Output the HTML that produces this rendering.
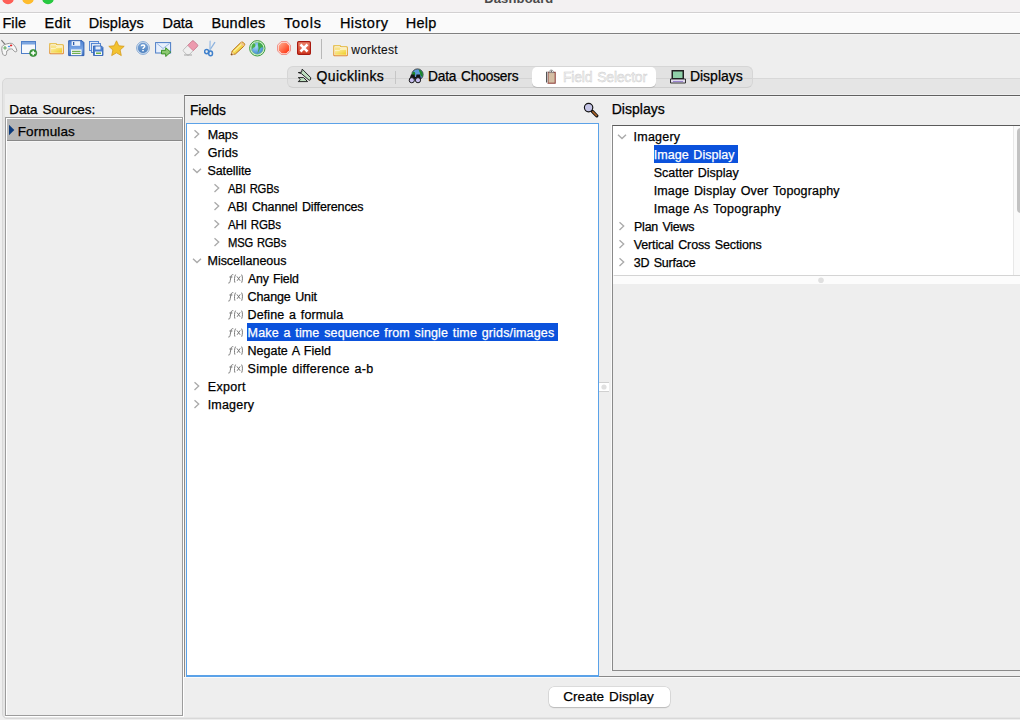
<!DOCTYPE html><html><head><meta charset="utf-8"><style>
html,body{margin:0;padding:0;width:1020px;height:720px;overflow:hidden;background:#eeeeee;font-family:"Liberation Sans",sans-serif}
.t{position:absolute;white-space:nowrap;transform-origin:0 0;font-family:"Liberation Sans",sans-serif}
.r{position:absolute;display:block}
</style></head><body>
<div class="r" style="left:0px;top:0px;width:1020px;height:12px;background:#f3f1f2"></div>
<div class="r" style="left:0px;top:12px;width:1020px;height:1px;background:#d2d0d1"></div>
<svg class="r" style="left:0px;top:0px" width="60" height="8" viewBox="0 0 60 8"><circle cx="8" cy="-1.5" r="5.8" fill="#fe5f57"/><circle cx="28" cy="-1.5" r="5.8" fill="#febc2e"/><circle cx="48" cy="-1.5" r="5.8" fill="#28c840"/></svg>
<div class="t" style="left:484.20px;top:-8.5px;font-size:13px;line-height:13px;color:#4a4a4a;letter-spacing:0.153px;font-weight:bold;">Dashboard</div>
<div class="r" style="left:0px;top:13px;width:1020px;height:20px;background:#fafafa"></div>
<div class="r" style="left:0px;top:13px;width:1020px;height:1px;background:#fefefe"></div>
<div class="r" style="left:0px;top:33px;width:1020px;height:1px;background:#808080"></div>
<div class="r" style="left:0px;top:34px;width:1020px;height:1px;background:#f3f3f3"></div>
<div class="t" style="left:2.40px;top:16px;font-size:14.5px;line-height:14.5px;color:#000;letter-spacing:0.108px;-webkit-text-stroke:0.25px #000;">File</div>
<div class="t" style="left:44.50px;top:16px;font-size:14.5px;line-height:14.5px;color:#000;letter-spacing:0.367px;-webkit-text-stroke:0.25px #000;">Edit</div>
<div class="t" style="left:88.70px;top:16px;font-size:14.5px;line-height:14.5px;color:#000;letter-spacing:0.055px;-webkit-text-stroke:0.25px #000;">Displays</div>
<div class="t" style="left:162.50px;top:16px;font-size:14.5px;line-height:14.5px;color:#000;letter-spacing:-0.096px;-webkit-text-stroke:0.25px #000;">Data</div>
<div class="t" style="left:211.40px;top:16px;font-size:14.5px;line-height:14.5px;color:#000;letter-spacing:0.238px;-webkit-text-stroke:0.25px #000;">Bundles</div>
<div class="t" style="left:283.90px;top:16px;font-size:14.5px;line-height:14.5px;color:#000;letter-spacing:0.806px;-webkit-text-stroke:0.25px #000;">Tools</div>
<div class="t" style="left:339.90px;top:16px;font-size:14.5px;line-height:14.5px;color:#000;letter-spacing:0.496px;-webkit-text-stroke:0.25px #000;">History</div>
<div class="t" style="left:405.80px;top:16px;font-size:14.5px;line-height:14.5px;color:#000;letter-spacing:0.229px;-webkit-text-stroke:0.25px #000;">Help</div>
<div class="r" style="left:0px;top:35px;width:1020px;height:60px;background:#eeeeee"></div>
<svg class="r" style="left:0px;top:38px" width="20" height="20" viewBox="0 0 20 20"><path d="M1.4 2.2 L5.2 6.6" stroke="#777" stroke-width="1.1" fill="none"/>
<path d="M2.2 8.5 C3 6.8 6 6 8 5.6 C10.5 5 12.5 5.2 13.5 6.5 C15 8 16.5 10.5 16.8 12.5 C17 13.8 15.5 14.2 14.5 13.5 C13.5 12.5 13 11.5 12 10.8 C10.5 10.5 8 12 6.8 13 C6.5 14.5 6.8 16.5 6 17.2 C5 17.6 3.5 17.5 3 16.5 C2 14 1.2 11 2.2 8.5 Z" fill="#f7f7f7" stroke="#8a8a8a" stroke-width="0.9"/>
<path d="M7.5 11.5 C9 10.5 11 10.2 12 10.8" stroke="#c8c8c8" stroke-width="1.2" fill="none"/>
<path d="M3.2 9.9 h3.6 M5 8.1 v3.6" stroke="#5aa85a" stroke-width="1.05"/>
<ellipse cx="9" cy="8.4" rx="1.2" ry="0.75" fill="#4a96f0"/><ellipse cx="11.1" cy="7.4" rx="1.2" ry="0.85" fill="#e02424"/></svg>
<svg class="r" style="left:21px;top:41px" width="17" height="16" viewBox="0 0 17 16"><rect x="0.5" y="0.5" width="14" height="12" fill="#f6f8fc" stroke="#4f7fc8"/>
<rect x="1" y="1" width="13" height="2.5" fill="#7aa4e0"/>
<circle cx="12.2" cy="12" r="3.6" fill="#3c9a3c" stroke="#2a7a2a" stroke-width="0.6"/>
<path d="M9.9 12 h4.6 M12.2 9.7 v4.6" stroke="#fff" stroke-width="1.5"/></svg>
<svg class="r" style="left:48.5px;top:42.5px" width="16" height="13" viewBox="0 0 16 13"><defs><linearGradient id="fo1b" x1="0" y1="0" x2="0" y2="1"><stop offset="0" stop-color="#e2b62e"/><stop offset="1" stop-color="#e0862a"/></linearGradient><linearGradient id="fo1f" x1="0" y1="0" x2="1" y2="1"><stop offset="0" stop-color="#fbf0b0"/><stop offset="1" stop-color="#f0cc20"/></linearGradient></defs>
<path d="M0.8 0.8 H7.2 L8 1.8 H13.5 Q14.3 1.8 14.3 2.6 V10.2 Q14.3 10.8 13.5 10.8 H1.6 Q0.8 10.8 0.8 10 Z" fill="#fffdf0" stroke="url(#fo1b)" stroke-width="1.1"/>
<path d="M2 2.3 H6.8 L7.6 3.2 H13 V3.8 H7.6 L6.8 5 H2 Z" fill="#f6dc70" opacity="0.8"/>
<path d="M2 5.4 H6.5 L7.5 4.6 H13 V9.7 H2 Z" fill="url(#fo1f)"/></svg>
<svg class="r" style="left:68px;top:40px" width="17" height="17" viewBox="0 0 17 17"><defs><linearGradient id="fl" x1="0" y1="0" x2="0" y2="1"><stop offset="0" stop-color="#4a7ed0"/><stop offset="0.55" stop-color="#7aa6e6"/><stop offset="1" stop-color="#3f72c4"/></linearGradient></defs>
<path d="M0.7 0.7 h13.3 l1.9 1.9 v13 h-15.2 Z" fill="url(#fl)" stroke="#2c5cae" stroke-width="1"/>
<rect x="3.6" y="1.2" width="8.6" height="4.6" fill="#eef3fa"/><rect x="5" y="2" width="1.3" height="3" fill="#2c5cae"/>
<rect x="3" y="9.4" width="10.6" height="5.8" fill="#f6f8fb"/><rect x="4" y="10.8" width="8.6" height="1.2" fill="#72b050"/><rect x="4" y="12.8" width="8.6" height="1.2" fill="#72b050"/></svg>
<svg class="r" style="left:89px;top:41px" width="15" height="15" viewBox="0 0 15 15"><rect x="0.5" y="0.5" width="9" height="9" fill="#dfe8f6" stroke="#4a7fd0" stroke-width="0.9"/>
<rect x="2.5" y="2.5" width="9" height="9" fill="#dfe8f6" stroke="#4a7fd0" stroke-width="0.9"/>
<path d="M4.5 5 h8 l1.5 1.5 v8 h-9.5 Z" fill="#4a7fd0" stroke="#2f5fae" stroke-width="0.8"/>
<rect x="6.5" y="5.5" width="5" height="3" fill="#e8eef8"/><rect x="6" y="10.5" width="7" height="3.5" fill="#f4f7fb"/><rect x="7" y="11.5" width="5" height="1.5" fill="#6ab04a"/></svg>
<svg class="r" style="left:108px;top:40px" width="17" height="17" viewBox="0 0 17 17"><path d="M8.5 0.8 L10.8 5.8 L16.2 6.3 L12.1 10 L13.3 15.6 L8.5 12.8 L3.7 15.6 L4.9 10 L0.8 6.3 L6.2 5.8 Z" fill="#f2c230" stroke="#d69a1a" stroke-width="0.8" stroke-linejoin="round"/></svg>
<svg class="r" style="left:136px;top:41px" width="15" height="15" viewBox="0 0 15 15"><defs><linearGradient id="hg" x1="0" y1="0" x2="0" y2="1"><stop offset="0" stop-color="#7aa6d8"/><stop offset="1" stop-color="#4f82c0"/></linearGradient></defs>
<circle cx="7" cy="7" r="6.4" fill="#dfeaf6" stroke="#78a0d0" stroke-width="0.9"/>
<circle cx="7" cy="7" r="4.9" fill="url(#hg)" stroke="#4a7ab8" stroke-width="0.5"/>
<path d="M5.3 5.3 C5.3 3.5 8.7 3.5 8.7 5.3 C8.7 6.5 7 6.6 7 8" stroke="#fff" stroke-width="1.5" fill="none"/><rect x="6.2" y="9" width="1.6" height="1.3" fill="#fff"/></svg>
<svg class="r" style="left:155px;top:41.5px" width="17" height="15" viewBox="0 0 17 15"><rect x="0.6" y="0.6" width="15" height="10.4" fill="#e8f0fc" stroke="#4a7cc6" stroke-width="1"/>
<path d="M2 1.5 L8 6.5 L14.5 1.5" stroke="#8fb0e0" stroke-width="0.9" fill="none"/>
<path d="M6.5 8.3 h4.2 v-2.6 l5 4.4 l-5 4.4 v-2.6 h-4.2 Z" fill="#8cc870" stroke="#2f8a1a" stroke-width="0.9"/></svg>
<svg class="r" style="left:182px;top:40px" width="17" height="16" viewBox="0 0 17 16"><g transform="rotate(-45 8.5 8)"><rect x="1.2" y="4.2" width="14.5" height="7.6" rx="1.5" fill="#efefef" stroke="#b5b5b5" stroke-width="0.8"/>
<path d="M8.5 4.2 H14.2 A1.5 1.5 0 0 1 15.7 5.7 V10.3 A1.5 1.5 0 0 1 14.2 11.8 H8.5 Z" fill="#ec9aae" stroke="#d07c92" stroke-width="0.8"/></g>
<path d="M2 15 h8" stroke="#a5a5a5" stroke-width="1"/></svg>
<svg class="r" style="left:204px;top:40px" width="13" height="17" viewBox="0 0 13 17"><path d="M6.2 0.8 L5.8 11 M11 2.2 L5.2 11" stroke="#8db3de" stroke-width="1.3" fill="none"/>
<path d="M6.2 0.8 L5.8 11" stroke="#d8e6f4" stroke-width="0.5" fill="none"/>
<ellipse cx="2.6" cy="11.6" rx="2" ry="2.1" fill="none" stroke="#3f80cc" stroke-width="1.5"/><ellipse cx="6.6" cy="13.4" rx="1.9" ry="2.3" fill="none" stroke="#3f80cc" stroke-width="1.5"/></svg>
<svg class="r" style="left:230px;top:41px" width="16" height="15" viewBox="0 0 16 15"><path d="M1 14 L2.2 10 L10.8 1.6 C11.6 0.9 12.6 0.9 13.4 1.6 L14.2 2.4 C14.9 3.2 14.9 4.2 14.2 4.9 L5.4 13 Z" fill="#f4d850" stroke="#b86e16" stroke-width="1"/>
<path d="M3.6 10.6 L12 2.6" stroke="#fff4a0" stroke-width="1.2"/>
<path d="M1.8 10.8 L4.6 13.4 L1 14 Z" fill="#f0c8a0"/><path d="M1 14 L1.5 12.2 L2.8 13.5 Z" fill="#5a2a08"/><path d="M10.8 1.6 L14.2 4.9" stroke="#f0c090" stroke-width="1.8"/></svg>
<svg class="r" style="left:249px;top:40px" width="17" height="17" viewBox="0 0 17 17"><defs><radialGradient id="gl" cx="0.4" cy="0.35" r="0.7"><stop offset="0" stop-color="#a8d8f8"/><stop offset="1" stop-color="#3a86d0"/></radialGradient></defs>
<circle cx="8.3" cy="8.3" r="7.7" fill="#d8f2d0" stroke="#3a9c3e" stroke-width="1"/>
<circle cx="8.3" cy="8.3" r="6" fill="url(#gl)" stroke="#7cc870" stroke-width="0.6"/>
<path d="M4.2 3.6 C6 3.2 7 4.8 6.2 6.5 C5.6 7.8 4.4 7.2 3.2 9.2 C2.5 7 2.8 5 4.2 3.6 Z" fill="#48b04a"/>
<path d="M9.5 2.6 C12 3 14 5 14.2 7.6 C13 7 12 7.5 11.2 8.6 C10.5 10.5 9.5 12 8.5 13.5 C8.8 11 9.8 9.2 9.4 7.2 C9 5.6 8.6 4 9.5 2.6 Z" fill="#3aa83c" opacity="0.9"/></svg>
<svg class="r" style="left:277px;top:41px" width="14" height="14" viewBox="0 0 14 14"><defs><linearGradient id="sg" x1="0" y1="0" x2="1" y2="1"><stop offset="0" stop-color="#ffb090"/><stop offset="1" stop-color="#ff2a08"/></linearGradient></defs>
<path d="M4.2 0.5 h5.6 l3.7 3.7 v5.6 l-3.7 3.7 h-5.6 l-3.7 -3.7 v-5.6 Z" fill="#fbe0dc" stroke="#f08a80" stroke-width="0.9"/>
<path d="M4.7 1.8 h4.6 l2.9 2.9 v4.6 l-2.9 2.9 h-4.6 l-2.9 -2.9 v-4.6 Z" fill="url(#sg)"/></svg>
<svg class="r" style="left:297px;top:41px" width="14" height="14" viewBox="0 0 14 14"><defs><linearGradient id="xg" x1="0" y1="0" x2="0" y2="1"><stop offset="0" stop-color="#f08a70"/><stop offset="1" stop-color="#d03820"/></linearGradient></defs>
<rect x="0.6" y="0.6" width="12.8" height="12.8" rx="1.2" fill="url(#xg)" stroke="#a81a10" stroke-width="1.2"/>
<path d="M4.4 4.4 L9.6 9.6 M9.6 4.4 L4.4 9.6" stroke="#fff" stroke-width="2.6" stroke-linecap="square"/></svg>
<div class="r" style="left:321px;top:39px;width:1px;height:20px;background:#b8b8b8"></div>
<svg class="r" style="left:332.5px;top:44.5px" width="16" height="13" viewBox="0 0 16 13"><defs><linearGradient id="fo2b" x1="0" y1="0" x2="0" y2="1"><stop offset="0" stop-color="#e2b62e"/><stop offset="1" stop-color="#e0862a"/></linearGradient><linearGradient id="fo2f" x1="0" y1="0" x2="1" y2="1"><stop offset="0" stop-color="#fbf0b0"/><stop offset="1" stop-color="#f0cc20"/></linearGradient></defs>
<path d="M0.8 0.8 H7.2 L8 1.8 H13.5 Q14.3 1.8 14.3 2.6 V10.2 Q14.3 10.8 13.5 10.8 H1.6 Q0.8 10.8 0.8 10 Z" fill="#fffdf0" stroke="url(#fo2b)" stroke-width="1.1"/>
<path d="M2 2.3 H6.8 L7.6 3.2 H13 V3.8 H7.6 L6.8 5 H2 Z" fill="#f6dc70" opacity="0.8"/>
<path d="M2 5.4 H6.5 L7.5 4.6 H13 V9.7 H2 Z" fill="url(#fo2f)"/></svg>
<div class="t" style="left:351.36px;top:44px;font-size:12px;line-height:12px;color:#111;letter-spacing:0.207px;-webkit-text-stroke:0.25px #111;-webkit-text-stroke:0.1px #111;">worktest</div>
<div class="r" style="left:2px;top:78px;width:1030px;height:641px;background:#e5e5e5;border:1px solid #d8d8d8;border-radius:5px;box-sizing:border-box"></div>
<div class="r" style="left:5px;top:94px;width:1020px;height:623px;background:#eeeeee"></div>
<div class="r" style="left:287px;top:66px;width:466px;height:22px;background:#e2e2e2;border:1px solid #d6d6d6;border-bottom-color:#cfcfcf;border-radius:6px;box-sizing:border-box"></div>
<div class="r" style="left:288px;top:78px;width:464px;height:1px;background:#d4d4d4"></div>
<div class="r" style="left:532px;top:67px;width:124px;height:20px;background:#fff;border-radius:5px;box-shadow:0 1px 0.6px #b8b8b8"></div>
<div class="r" style="left:395px;top:71px;width:1px;height:13px;background:#c6c6c6"></div>
<svg class="r" style="left:294px;top:66px" width="22" height="22" viewBox="0 0 22 22"><path d="M4.3 6.6 L7.6 6.2 L8.2 3.1 L16.6 11.5 L16.6 13.6 L15.2 14.3 L7.4 7.6 Z" fill="#bfe0c0" stroke="#111" stroke-width="0.9" stroke-linejoin="round"/>
<path d="M4.3 11.6 L9.6 11.6 L13.6 15.6 L4.3 15.6 L6.3 13.5 Z" fill="#bfe0c0" stroke="#111" stroke-width="0.9" stroke-linejoin="round"/></svg>
<svg class="r" style="left:408px;top:68px" width="16" height="16" viewBox="0 0 16 16"><circle cx="9.5" cy="6.5" r="5.6" fill="#5c9ad8" stroke="#222" stroke-width="0.8"/>
<path d="M5 4 C6.5 3 8 5 7 7 C6 8.5 5 8 4.2 9 C3.8 7 4 5 5 4Z M11 1.5 C14 2.5 15.5 5.5 14.5 9 C13 8.5 12 7 12 5 C11.5 3.5 10.5 3 11 1.5Z" fill="#1f8a2a"/>
<path d="M1.5 11 L3 6.5 H6.5 L7 9 H8 L8.5 6.5 H12 L13 11 Z" fill="#151515"/>
<circle cx="3.8" cy="12.2" r="2.6" fill="#c8c0f0" stroke="#151515" stroke-width="1"/><circle cx="10" cy="12.2" r="2.6" fill="#c8c0f0" stroke="#151515" stroke-width="1"/></svg>
<svg class="r" style="left:546px;top:68px" width="10" height="16" viewBox="0 0 10 16"><rect x="2" y="4.3" width="7.2" height="10.9" fill="#d4bfa4" stroke="#8a3a34" stroke-width="1"/>
<path d="M0.8 3.8 V14.6" stroke="#2a2a2a" stroke-width="1.2"/><path d="M1.6 4 V15" stroke="#f4f4f4" stroke-width="0.6"/>
<path d="M3 4.6 C3 1.2 7.6 1.2 7.6 4.6 Z" fill="#eeeeee" stroke="#777" stroke-width="0.7"/><circle cx="5.3" cy="3.3" r="0.7" fill="#555"/></svg>
<svg class="r" style="left:670px;top:69px" width="16" height="15" viewBox="0 0 16 15"><rect x="1.5" y="1" width="12.5" height="9" fill="#222" /><rect x="3" y="2.5" width="9.5" height="6.5" fill="#8fd0a8"/>
<path d="M0.5 10 H15.5 V14 H0.5 Z" fill="#e2dcef" stroke="#222" stroke-width="0.9"/><path d="M3 12.5 H13" stroke="#9a84d0" stroke-width="1"/></svg>
<div class="t" style="left:316.60px;top:69px;font-size:14px;line-height:14px;color:#000;letter-spacing:0.387px;-webkit-text-stroke:0.25px #000;">Quicklinks</div>
<div class="t" style="left:427.90px;top:69px;font-size:14px;line-height:14px;color:#000;letter-spacing:-0.200px;word-spacing:1.26px;transform:scaleX(0.9812);-webkit-text-stroke:0.25px #000;">Data Choosers</div>
<div class="t" style="left:563.10px;top:70px;font-size:14px;line-height:14px;color:#f4f4f4;letter-spacing:-0.200px;word-spacing:1.26px;transform:scaleX(0.9974);-webkit-text-stroke:0.25px #f4f4f4;-webkit-text-stroke:0.45px #cdcdcd;">Field Selector</div>
<div class="t" style="left:689.90px;top:69px;font-size:14px;line-height:14px;color:#000;letter-spacing:0.004px;-webkit-text-stroke:0.25px #000;">Displays</div>
<div class="t" style="left:9.20px;top:103px;font-size:13.5px;line-height:13.5px;color:#000;letter-spacing:-0.056px;word-spacing:1.21px;-webkit-text-stroke:0.25px #000;">Data Sources:</div>
<div class="r" style="left:5px;top:117px;width:178px;height:599px;border:1px solid #9c9c9c;box-sizing:border-box"></div>
<div class="r" style="left:6px;top:118px;width:1px;height:597px;background:#fff"></div>
<div class="r" style="left:6px;top:118px;width:176px;height:1px;background:#fff"></div>
<div class="r" style="left:5px;top:716px;width:179px;height:1px;background:#fff"></div>
<div class="r" style="left:183px;top:117px;width:1px;height:600px;background:#fff"></div>
<div class="r" style="left:7px;top:119px;width:175px;height:21px;background:#b6b6b6"></div>
<div class="r" style="left:7px;top:140px;width:175px;height:1px;background:#888"></div>
<div class="r" style="left:7px;top:141px;width:175px;height:1px;background:#f6f6f6"></div>
<svg class="r" style="left:8px;top:124px" width="8" height="12" viewBox="0 0 8 12"><path d="M1 0.8 L6.3 6 L1 11.2 Z" fill="#0b3a7c"/></svg>
<div class="t" style="left:17.70px;top:125px;font-size:13.5px;line-height:13.5px;color:#000;letter-spacing:0.121px;-webkit-text-stroke:0.25px #000;">Formulas</div>
<div class="r" style="left:184px;top:95px;width:840px;height:582px;border-top:1px solid #606060;border-left:1px solid #8a8a8a;border-bottom:1px solid #888;box-sizing:border-box"></div>
<div class="r" style="left:185px;top:96px;width:840px;height:1px;background:#f5f5f5"></div>
<div class="r" style="left:184px;top:677px;width:840px;height:1px;background:#fafafa"></div>
<div class="t" style="left:189.90px;top:103px;font-size:14px;line-height:14px;color:#000;letter-spacing:-0.200px;transform:scaleX(0.9869);-webkit-text-stroke:0.25px #000;">Fields</div>
<svg class="r" style="left:583px;top:102px" width="16" height="16" viewBox="0 0 16 16"><path d="M9.5 9.5 L13.8 13.8" stroke="#111" stroke-width="3.2" stroke-linecap="round"/><path d="M9.8 9.8 L13.5 13.5" stroke="#b0672a" stroke-width="1.6" stroke-linecap="round"/>
<circle cx="5.6" cy="5.6" r="4.2" fill="#c4c4e6" stroke="#111" stroke-width="1.15"/></svg>
<div class="r" style="left:186px;top:123px;width:413px;height:554px;background:#fff;border:1px solid #5ba2e8;border-bottom-width:2px;box-sizing:border-box"></div>
<div class="r" style="left:185px;top:123px;width:1px;height:554px;background:#f7f2ec"></div>
<svg class="r" style="left:192.5px;top:129px" width="8" height="10" viewBox="0 0 8 10"><path d="M1.5 1.2 L5.7 5.1 L1.5 9" stroke="#ababab" stroke-width="1.35" fill="none"/></svg>
<div class="t" style="left:207.70px;top:129px;font-size:12.5px;line-height:12.5px;color:#000;letter-spacing:-0.121px;-webkit-text-stroke:0.25px #000;">Maps</div>
<svg class="r" style="left:192.5px;top:147px" width="8" height="10" viewBox="0 0 8 10"><path d="M1.5 1.2 L5.7 5.1 L1.5 9" stroke="#ababab" stroke-width="1.35" fill="none"/></svg>
<div class="t" style="left:207.70px;top:147px;font-size:12.5px;line-height:12.5px;color:#000;letter-spacing:0.131px;-webkit-text-stroke:0.25px #000;">Grids</div>
<svg class="r" style="left:191.5px;top:167px" width="10" height="8" viewBox="0 0 10 8"><path d="M1 1.8 L5 5.6 L9 1.8" stroke="#ababab" stroke-width="1.4" fill="none"/></svg>
<div class="t" style="left:207.50px;top:165px;font-size:12.5px;line-height:12.5px;color:#000;letter-spacing:-0.087px;-webkit-text-stroke:0.25px #000;">Satellite</div>
<svg class="r" style="left:212.5px;top:183px" width="8" height="10" viewBox="0 0 8 10"><path d="M1.5 1.2 L5.7 5.1 L1.5 9" stroke="#ababab" stroke-width="1.35" fill="none"/></svg>
<div class="t" style="left:227.70px;top:183px;font-size:12.5px;line-height:12.5px;color:#000;letter-spacing:-0.200px;word-spacing:1.12px;transform:scaleX(0.9036);-webkit-text-stroke:0.25px #000;">ABI RGBs</div>
<svg class="r" style="left:212.5px;top:201px" width="8" height="10" viewBox="0 0 8 10"><path d="M1.5 1.2 L5.7 5.1 L1.5 9" stroke="#ababab" stroke-width="1.35" fill="none"/></svg>
<div class="t" style="left:227.70px;top:201px;font-size:12.5px;line-height:12.5px;color:#000;letter-spacing:-0.135px;word-spacing:1.12px;-webkit-text-stroke:0.25px #000;">ABI Channel Differences</div>
<svg class="r" style="left:212.5px;top:219px" width="8" height="10" viewBox="0 0 8 10"><path d="M1.5 1.2 L5.7 5.1 L1.5 9" stroke="#ababab" stroke-width="1.35" fill="none"/></svg>
<div class="t" style="left:227.70px;top:219px;font-size:12.5px;line-height:12.5px;color:#000;letter-spacing:-0.200px;word-spacing:1.12px;transform:scaleX(0.9259);-webkit-text-stroke:0.25px #000;">AHI RGBs</div>
<svg class="r" style="left:212.5px;top:237px" width="8" height="10" viewBox="0 0 8 10"><path d="M1.5 1.2 L5.7 5.1 L1.5 9" stroke="#ababab" stroke-width="1.35" fill="none"/></svg>
<div class="t" style="left:227.70px;top:237px;font-size:12.5px;line-height:12.5px;color:#000;letter-spacing:-0.200px;word-spacing:1.12px;transform:scaleX(0.8964);-webkit-text-stroke:0.25px #000;">MSG RGBs</div>
<svg class="r" style="left:191.5px;top:257px" width="10" height="8" viewBox="0 0 10 8"><path d="M1 1.8 L5 5.6 L9 1.8" stroke="#ababab" stroke-width="1.4" fill="none"/></svg>
<div class="t" style="left:207.50px;top:255px;font-size:12.5px;line-height:12.5px;color:#000;letter-spacing:-0.024px;-webkit-text-stroke:0.25px #000;">Miscellaneous</div>
<svg class="r" style="left:227px;top:273px" width="18" height="11" viewBox="0 0 18 11"><g fill="none" stroke="#7a7a7a" stroke-width="1" transform="translate(0,0.8)"><path d="M1.3 9.2 C2.6 9.6 3 8.5 3.3 6.5 L3.9 3.2 C4.2 1.2 5 0.6 6.3 0.9"/><path d="M2.4 3.2 H5.4" stroke-width="1.1"/><path d="M8.6 0.8 C7.4 2.5 7.2 6.5 7.9 8.8"/><path d="M9.9 2.6 L13.2 7 M13.2 2.6 L10.1 7" stroke-width="1"/><path d="M14.6 0.8 C15.6 2.5 15.8 6 14.7 8.9"/></g></svg>
<div class="t" style="left:247.60px;top:273px;font-size:12.5px;line-height:12.5px;color:#000;letter-spacing:-0.200px;word-spacing:1.12px;transform:scaleX(0.9855);-webkit-text-stroke:0.25px #000;">Any Field</div>
<svg class="r" style="left:227px;top:291px" width="18" height="11" viewBox="0 0 18 11"><g fill="none" stroke="#7a7a7a" stroke-width="1" transform="translate(0,0.8)"><path d="M1.3 9.2 C2.6 9.6 3 8.5 3.3 6.5 L3.9 3.2 C4.2 1.2 5 0.6 6.3 0.9"/><path d="M2.4 3.2 H5.4" stroke-width="1.1"/><path d="M8.6 0.8 C7.4 2.5 7.2 6.5 7.9 8.8"/><path d="M9.9 2.6 L13.2 7 M13.2 2.6 L10.1 7" stroke-width="1"/><path d="M14.6 0.8 C15.6 2.5 15.8 6 14.7 8.9"/></g></svg>
<div class="t" style="left:247.60px;top:291px;font-size:12.5px;line-height:12.5px;color:#000;letter-spacing:-0.113px;word-spacing:1.12px;-webkit-text-stroke:0.25px #000;">Change Unit</div>
<svg class="r" style="left:227px;top:309px" width="18" height="11" viewBox="0 0 18 11"><g fill="none" stroke="#7a7a7a" stroke-width="1" transform="translate(0,0.8)"><path d="M1.3 9.2 C2.6 9.6 3 8.5 3.3 6.5 L3.9 3.2 C4.2 1.2 5 0.6 6.3 0.9"/><path d="M2.4 3.2 H5.4" stroke-width="1.1"/><path d="M8.6 0.8 C7.4 2.5 7.2 6.5 7.9 8.8"/><path d="M9.9 2.6 L13.2 7 M13.2 2.6 L10.1 7" stroke-width="1"/><path d="M14.6 0.8 C15.6 2.5 15.8 6 14.7 8.9"/></g></svg>
<div class="t" style="left:247.60px;top:309px;font-size:12.5px;line-height:12.5px;color:#000;letter-spacing:0.107px;word-spacing:1.12px;-webkit-text-stroke:0.25px #000;">Define a formula</div>
<div class="r" style="left:247px;top:323px;width:311px;height:18px;background:#0b52dc"></div>
<svg class="r" style="left:227px;top:327px" width="18" height="11" viewBox="0 0 18 11"><g fill="none" stroke="#7a7a7a" stroke-width="1" transform="translate(0,0.8)"><path d="M1.3 9.2 C2.6 9.6 3 8.5 3.3 6.5 L3.9 3.2 C4.2 1.2 5 0.6 6.3 0.9"/><path d="M2.4 3.2 H5.4" stroke-width="1.1"/><path d="M8.6 0.8 C7.4 2.5 7.2 6.5 7.9 8.8"/><path d="M9.9 2.6 L13.2 7 M13.2 2.6 L10.1 7" stroke-width="1"/><path d="M14.6 0.8 C15.6 2.5 15.8 6 14.7 8.9"/></g></svg>
<div class="t" style="left:247.60px;top:327px;font-size:12.5px;line-height:12.5px;color:#fff;letter-spacing:0.141px;word-spacing:1.12px;-webkit-text-stroke:0.25px #fff;">Make a time sequence from single time grids/images</div>
<svg class="r" style="left:227px;top:345px" width="18" height="11" viewBox="0 0 18 11"><g fill="none" stroke="#7a7a7a" stroke-width="1" transform="translate(0,0.8)"><path d="M1.3 9.2 C2.6 9.6 3 8.5 3.3 6.5 L3.9 3.2 C4.2 1.2 5 0.6 6.3 0.9"/><path d="M2.4 3.2 H5.4" stroke-width="1.1"/><path d="M8.6 0.8 C7.4 2.5 7.2 6.5 7.9 8.8"/><path d="M9.9 2.6 L13.2 7 M13.2 2.6 L10.1 7" stroke-width="1"/><path d="M14.6 0.8 C15.6 2.5 15.8 6 14.7 8.9"/></g></svg>
<div class="t" style="left:247.60px;top:345px;font-size:12.5px;line-height:12.5px;color:#000;letter-spacing:-0.020px;word-spacing:1.12px;-webkit-text-stroke:0.25px #000;">Negate A Field</div>
<svg class="r" style="left:227px;top:363px" width="18" height="11" viewBox="0 0 18 11"><g fill="none" stroke="#7a7a7a" stroke-width="1" transform="translate(0,0.8)"><path d="M1.3 9.2 C2.6 9.6 3 8.5 3.3 6.5 L3.9 3.2 C4.2 1.2 5 0.6 6.3 0.9"/><path d="M2.4 3.2 H5.4" stroke-width="1.1"/><path d="M8.6 0.8 C7.4 2.5 7.2 6.5 7.9 8.8"/><path d="M9.9 2.6 L13.2 7 M13.2 2.6 L10.1 7" stroke-width="1"/><path d="M14.6 0.8 C15.6 2.5 15.8 6 14.7 8.9"/></g></svg>
<div class="t" style="left:247.60px;top:363px;font-size:12.5px;line-height:12.5px;color:#000;letter-spacing:0.269px;word-spacing:1.12px;-webkit-text-stroke:0.25px #000;">Simple difference a-b</div>
<svg class="r" style="left:192.5px;top:381px" width="8" height="10" viewBox="0 0 8 10"><path d="M1.5 1.2 L5.7 5.1 L1.5 9" stroke="#ababab" stroke-width="1.35" fill="none"/></svg>
<div class="t" style="left:207.70px;top:381px;font-size:12.5px;line-height:12.5px;color:#000;letter-spacing:0.355px;-webkit-text-stroke:0.25px #000;">Export</div>
<svg class="r" style="left:192.5px;top:399px" width="8" height="10" viewBox="0 0 8 10"><path d="M1.5 1.2 L5.7 5.1 L1.5 9" stroke="#ababab" stroke-width="1.35" fill="none"/></svg>
<div class="t" style="left:207.70px;top:399px;font-size:12.5px;line-height:12.5px;color:#000;letter-spacing:0.196px;-webkit-text-stroke:0.25px #000;">Imagery</div>
<div class="r" style="left:599px;top:382px;width:10px;height:10px;background:#fff;border-top:1px solid #d0d0d0;border-bottom:1px solid #d0d0d0;box-sizing:border-box"></div>
<svg class="r" style="left:600px;top:383px" width="8" height="8" viewBox="0 0 8 8"><circle cx="4" cy="4" r="2.6" fill="#e0e0e0"/></svg>
<div class="t" style="left:611.70px;top:102px;font-size:14px;line-height:14px;color:#000;letter-spacing:0.032px;-webkit-text-stroke:0.25px #000;">Displays</div>
<div class="r" style="left:611px;top:124px;width:1px;height:547px;background:#fafafa"></div>
<div class="r" style="left:612px;top:125px;width:410px;height:546px;border-top:1px solid #5a5a5a;border-left:1px solid #8a8a8a;border-bottom:1px solid #8a8a8a;box-sizing:border-box;background:#eeeeee"></div>
<div class="r" style="left:613px;top:126px;width:408px;height:149px;background:#fff"></div>
<div class="r" style="left:614px;top:275px;width:408px;height:1px;background:#d4d4d4"></div>
<div class="r" style="left:613px;top:276px;width:408px;height:8px;background:#fcfcfc"></div>
<svg class="r" style="left:817px;top:277px" width="8" height="7" viewBox="0 0 8 7"><circle cx="4" cy="3.3" r="2.8" fill="#e0e0e0"/></svg>
<div class="r" style="left:1013px;top:126px;width:1px;height:149px;background:#e8e8e8"></div>
<div class="r" style="left:1014px;top:126px;width:7px;height:149px;background:#fafafa"></div>
<div class="r" style="left:1017px;top:128px;width:8px;height:85px;background:#c2c2c2;border-radius:4px"></div>
<svg class="r" style="left:616.7px;top:133px" width="10" height="8" viewBox="0 0 10 8"><path d="M1 1.8 L5 5.6 L9 1.8" stroke="#ababab" stroke-width="1.4" fill="none"/></svg>
<div class="t" style="left:633.60px;top:131px;font-size:12.5px;line-height:12.5px;color:#000;letter-spacing:0.212px;-webkit-text-stroke:0.25px #000;">Imagery</div>
<div class="r" style="left:654px;top:145px;width:84px;height:18px;background:#0b52dc"></div>
<div class="t" style="left:653.70px;top:149px;font-size:12.5px;line-height:12.5px;color:#fff;letter-spacing:0.049px;word-spacing:1.12px;-webkit-text-stroke:0.25px #fff;">Image Display</div>
<div class="t" style="left:653.70px;top:167px;font-size:12.5px;line-height:12.5px;color:#000;letter-spacing:-0.006px;word-spacing:1.12px;-webkit-text-stroke:0.25px #000;">Scatter Display</div>
<div class="t" style="left:653.70px;top:185px;font-size:12.5px;line-height:12.5px;color:#000;letter-spacing:0.150px;word-spacing:1.12px;-webkit-text-stroke:0.25px #000;">Image Display Over Topography</div>
<div class="t" style="left:653.70px;top:203px;font-size:12.5px;line-height:12.5px;color:#000;letter-spacing:0.231px;word-spacing:1.12px;-webkit-text-stroke:0.25px #000;">Image As Topography</div>
<svg class="r" style="left:618.2px;top:221px" width="8" height="10" viewBox="0 0 8 10"><path d="M1.5 1.2 L5.7 5.1 L1.5 9" stroke="#ababab" stroke-width="1.35" fill="none"/></svg>
<div class="t" style="left:633.70px;top:221px;font-size:12.5px;line-height:12.5px;color:#000;letter-spacing:-0.200px;word-spacing:1.12px;transform:scaleX(0.9926);-webkit-text-stroke:0.25px #000;">Plan Views</div>
<svg class="r" style="left:618.2px;top:239px" width="8" height="10" viewBox="0 0 8 10"><path d="M1.5 1.2 L5.7 5.1 L1.5 9" stroke="#ababab" stroke-width="1.35" fill="none"/></svg>
<div class="t" style="left:633.70px;top:239px;font-size:12.5px;line-height:12.5px;color:#000;letter-spacing:-0.120px;word-spacing:1.12px;-webkit-text-stroke:0.25px #000;">Vertical Cross Sections</div>
<svg class="r" style="left:618.2px;top:257px" width="8" height="10" viewBox="0 0 8 10"><path d="M1.5 1.2 L5.7 5.1 L1.5 9" stroke="#ababab" stroke-width="1.35" fill="none"/></svg>
<div class="t" style="left:633.70px;top:257px;font-size:12.5px;line-height:12.5px;color:#000;letter-spacing:-0.188px;word-spacing:1.12px;-webkit-text-stroke:0.25px #000;">3D Surface</div>
<div class="r" style="left:549px;top:687px;width:121px;height:20px;background:#fff;border-radius:5px;box-shadow:0 0 0 0.5px #c8c8c8,0 1px 1px #b0b0b0"></div>
<div class="t" style="left:563.20px;top:690px;font-size:13.5px;line-height:13.5px;color:#000;letter-spacing:0.063px;word-spacing:1.21px;-webkit-text-stroke:0.25px #000;">Create Display</div>
</body></html>
